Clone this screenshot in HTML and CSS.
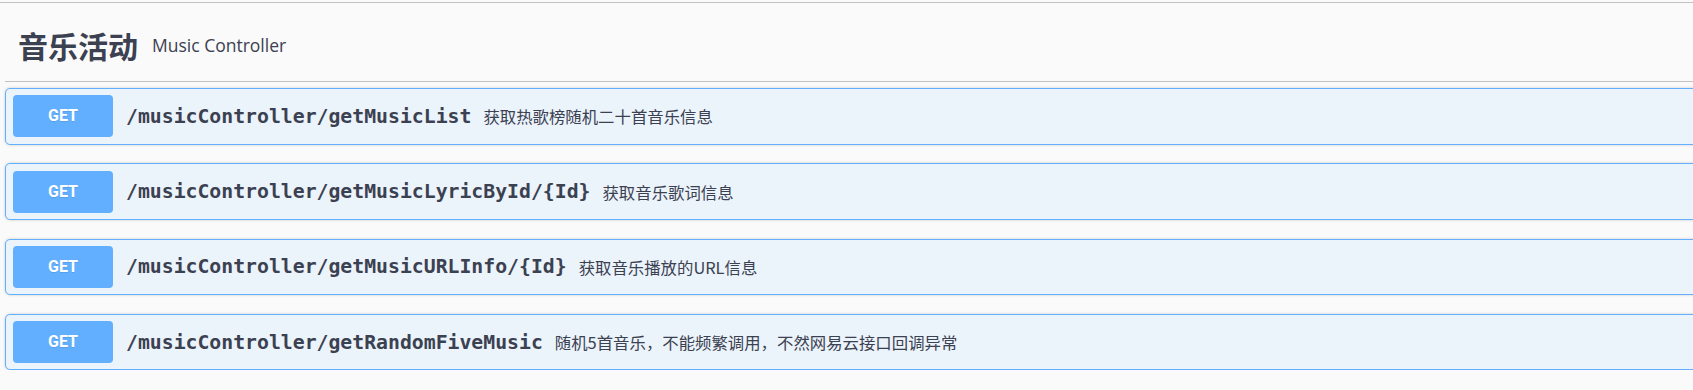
FILE: index.html
```html
<!DOCTYPE html>
<html lang="zh-CN">
<head>
    <meta charset="UTF-8">
    <meta name="viewport" content="width=device-width, initial-scale=1.0">
    <title>音乐活动 - Music Controller</title>
    <link rel="stylesheet" href="styles.css">
</head>
<body>
    <div class="tag-section">
        <h4 class="tag-title">
            <span class="tag-name">音乐活动</span>
            <small class="tag-desc">Music Controller</small>
        </h4>

        <div class="operations">
            <div class="opblock">
                <span class="method">GET</span>
                <span class="path">/musicController/getMusicList</span>
                <span class="summary">获取热歌榜随机二十首音乐信息</span>
            </div>
            <div class="opblock">
                <span class="method">GET</span>
                <span class="path">/musicController/getMusicLyricById/{Id}</span>
                <span class="summary">获取音乐歌词信息</span>
            </div>
            <div class="opblock">
                <span class="method">GET</span>
                <span class="path">/musicController/getMusicURLInfo/{Id}</span>
                <span class="summary">获取音乐播放的URL信息</span>
            </div>
            <div class="opblock">
                <span class="method">GET</span>
                <span class="path">/musicController/getRandomFiveMusic</span>
                <span class="summary">随机5首音乐，不能频繁调用，不然网易云接口回调异常</span>
            </div>
        </div>
    </div>
</body>
</html>
```

FILE: styles.css
```css
* {
    margin: 0;
    padding: 0;
    box-sizing: border-box;
}

body {
    background: #fafafa;
    color: #3b4151;
    font-family: 'Open Sans', 'Noto Sans CJK SC', sans-serif;
    padding-top: 2px;
    overflow-x: hidden;
}

.tag-section {
    border-top: 1px solid rgba(59, 65, 81, 0.3);
}

.tag-title {
    display: flex;
    align-items: center;
    margin: 0 -20px 0 5px;
    padding: 22px 25px 16px 13px;
    border-bottom: 1px solid rgba(59, 65, 81, 0.3);
}

.tag-title .tag-name {
    font-family: 'Noto Sans CJK SC', sans-serif;
    font-size: 30px;
    line-height: 40px;
    font-weight: 700;
    color: #3b4151;
}

.tag-title .tag-desc {
    flex: 1;
    padding: 0 13px 0 14px;
    font-size: 17.5px;
    font-weight: 400;
    color: #3b4151;
}

.operations {
    margin: 6px -20px 0 5px;
}

.opblock {
    display: flex;
    align-items: center;
    height: 56.5px;
    margin-bottom: 18.75px;
    padding: 0 7px;
    background: #ebf3fb;
    border: 1px solid #61affe;
    border-radius: 5px;
    box-shadow: 0 0 3px rgba(0, 0, 0, 0.19);
}

.opblock:last-child {
    margin-bottom: 0;
}

.opblock .method {
    width: 100px;
    height: 42px;
    line-height: 42px;
    text-align: center;
    background: #61affe;
    color: #fff;
    border-radius: 4px;
    font-family: 'Roboto', sans-serif;
    font-size: 16px;
    font-weight: 700;
    text-shadow: 0 1px 0 rgba(0, 0, 0, 0.1);
}

.opblock .path {
    padding: 0 12px 0 13px;
    font-family: 'DejaVu Sans Mono', monospace;
    font-size: 19.8px;
    font-weight: 600;
    color: #3b4151;
}

.opblock .summary {
    font-family: 'Noto Sans CJK SC', sans-serif;
    font-size: 16.4px;
    color: #3b4151;
}
```
